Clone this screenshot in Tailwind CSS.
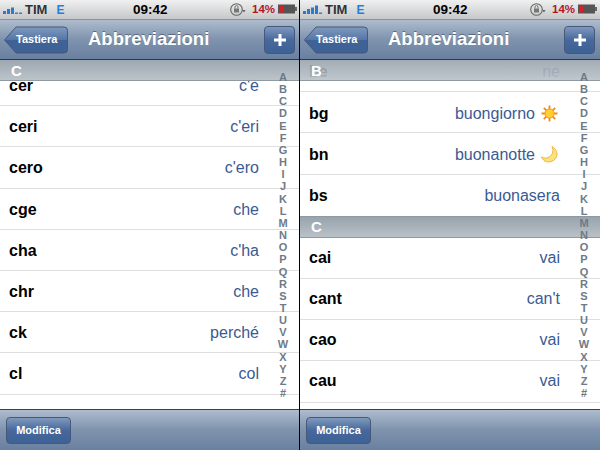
<!DOCTYPE html>
<html>
<head>
<meta charset="utf-8">
<script src="https://cdn.jsdelivr.net/npm/@tailwindcss/browser@4"></script>
</head>
<body class="m-0 bg-black">
<div class="flex w-[600px] h-[450px] overflow-hidden font-['Liberation_Sans',Arial,sans-serif]">

<!-- LEFT -->
<section class="relative flex flex-col w-[299px] h-[450px] mr-px bg-white overflow-hidden">
  <div class="flex items-center h-[19px] pl-[3px] bg-gradient-to-b from-[#f0f0f0] to-[#c6c8c9] relative z-20">
    <svg width="20" height="11" viewBox="0 0 20 11" class="mr-[2px]"><g fill="#2f78cc"><rect x="0" y="7" width="3" height="3"/><rect x="4" y="5" width="3" height="5"/><rect x="8" y="3.500" width="3" height="6.500"/></g><g fill="#4f7cb0"><rect x="12" y="8.500" width="3" height="1.500"/><rect x="16" y="8.500" width="3" height="1.500"/></g></svg>
    <span class="text-[13px] font-bold text-[#333] leading-none">TIM</span>
    <span class="text-[12px] font-bold text-[#1f7fe0] ml-[9px] leading-none">E</span>
    <span class="absolute left-[133px] text-[13.5px] font-bold text-black leading-none">09:42</span>
    <svg width="17" height="15" viewBox="0 0 17 15" class="absolute left-[229px] top-[2px]"><circle cx="7.5" cy="7.5" r="5.8" fill="none" stroke="#666" stroke-width="1.1"/><path d="M13 8l2 2.4 1.5-2.4" fill="#666"/><rect x="5" y="6.5" width="5" height="4" fill="#777"/><path d="M6 6.5v-1.500a1.500 1.500 0 0 1 3 0v1.500" fill="none" stroke="#777"/></svg>
    <span class="absolute left-[252px] text-[11.5px] font-bold text-[#b5161f] leading-none">14%</span>
    <svg width="20" height="10" viewBox="0 0 20 10" class="absolute left-[278px] top-[4px]"><rect x="0" y="0.500" width="17" height="9" fill="#555"/><rect x="1" y="1.500" width="4" height="7" fill="#d5202a"/><rect x="17" y="3" width="2" height="4" fill="#666"/></svg>
  </div>
  <header class="relative z-20 flex items-center justify-between h-[41px] pr-[4px] pl-[5px] bg-gradient-to-b from-[#aebccd] via-[#7f93ae] to-[#6a80a0] border-t border-[#8a929b] border-b border-b-[#2d3a4a]">
    <div class="relative flex items-center h-[27px] w-[63px] ml-[1px]">
      <svg width="64" height="28" viewBox="0 0 64 28" class="absolute -left-[2px] top-0"><defs><linearGradient id="bk1" x1="0" y1="0" x2="0" y2="1"><stop offset="0" stop-color="#7f99bd"/><stop offset="0.5" stop-color="#5476a6"/><stop offset="0.5" stop-color="#3f6297"/><stop offset="1" stop-color="#3e6196"/></linearGradient></defs><path d="M0.500 14 L12 1 H60 a3.500 3.500 0 0 1 3.500 3.500 V23.500 a3.500 3.500 0 0 1 -3.500 3.500 H12 Z" fill="url(#bk1)" stroke="#46597a"/></svg>
      <span class="relative ml-[10px] text-[11px] font-bold text-white leading-none">Tastiera</span>
    </div>
    <h1 class="absolute left-[88px] top-[8px] text-[18.5px] font-bold text-white leading-[22px] m-0 [text-shadow:0_-1px_0_rgba(0,0,0,0.35)]">Abbreviazioni</h1>
    <div class="flex items-center justify-center w-[31px] h-[28px] rounded-[4px] border border-[#46597a] bg-gradient-to-b from-[#7f99bd] via-[#46689b] to-[#3e6196]">
      <svg width="14" height="14" viewBox="0 0 14 14"><path d="M5.500 1h3v4.500H13v3H8.500V13h-3V8.500H1v-3h4.500z" fill="#fff"/></svg>
    </div>
  </header>

  <div class="relative flex-1 overflow-hidden">
    <div class="absolute z-10 left-0 right-0 top-0 flex items-center h-[21px] pl-[11px] bg-gradient-to-b from-[#98a3ac]/95 to-[#b9c1c8]/95 border-b border-[#8f99a2]">
      <span class="text-[15px] font-bold text-white leading-none">C</span>
    </div>
    <div class="pt-[5px] text-[16px]">
      <div class="flex items-center justify-between h-[41.2px] pt-[2px] pl-[9px] pr-[40px] border-b border-[#dfdfdf]"><b class="text-black">cer</b><span class="text-[#3b5a94]">c'è</span></div>
      <div class="flex items-center justify-between h-[41.2px] pt-[2px] pl-[9px] pr-[40px] border-b border-[#dfdfdf]"><b class="text-black">ceri</b><span class="text-[#3b5a94]">c'eri</span></div>
      <div class="flex items-center justify-between h-[41.2px] pt-[2px] pl-[9px] pr-[40px] border-b border-[#dfdfdf]"><b class="text-black">cero</b><span class="text-[#3b5a94]">c'ero</span></div>
      <div class="flex items-center justify-between h-[41.2px] pt-[2px] pl-[9px] pr-[40px] border-b border-[#dfdfdf]"><b class="text-black">cge</b><span class="text-[#3b5a94]">che</span></div>
      <div class="flex items-center justify-between h-[41.2px] pt-[2px] pl-[9px] pr-[40px] border-b border-[#dfdfdf]"><b class="text-black">cha</b><span class="text-[#3b5a94]">c'ha</span></div>
      <div class="flex items-center justify-between h-[41.2px] pt-[2px] pl-[9px] pr-[40px] border-b border-[#dfdfdf]"><b class="text-black">chr</b><span class="text-[#3b5a94]">che</span></div>
      <div class="flex items-center justify-between h-[41.2px] pt-[2px] pl-[9px] pr-[40px] border-b border-[#dfdfdf]"><b class="text-black">ck</b><span class="text-[#3b5a94]">perché</span></div>
      <div class="flex items-center justify-between h-[41.2px] pt-[2px] pl-[9px] pr-[40px] border-b border-[#dfdfdf]"><b class="text-black">cl</b><span class="text-[#3b5a94]">col</span></div>
    </div>
    <div class="absolute z-10 right-[6px] top-[11px] w-[20px] flex flex-col items-center text-[11px] font-bold text-[#6f7a86] leading-[12.15px]">
      <span>A</span><span>B</span><span>C</span><span>D</span><span>E</span><span>F</span><span>G</span><span>H</span><span>I</span><span>J</span><span>K</span><span>L</span><span>M</span><span>N</span><span>O</span><span>P</span><span>Q</span><span>R</span><span>S</span><span>T</span><span>U</span><span>V</span><span>W</span><span>X</span><span>Y</span><span>Z</span><span>#</span>
    </div>
  </div>

  <footer class="flex items-center h-[41px] pl-[6px] bg-gradient-to-b from-[#aebccd] via-[#7f93ae] to-[#6a80a0] border-t border-[#3a3f46]">
    <div class="flex items-center justify-center w-[65px] h-[27px] rounded-[4px] border border-[#46597a] bg-gradient-to-b from-[#7f99bd] via-[#46689b] to-[#3e6196]">
      <span class="text-[11px] font-bold text-white leading-none">Modifica</span>
    </div>
  </footer>
</section>

<!-- RIGHT -->
<section class="relative flex flex-col w-[300px] h-[450px] bg-white overflow-hidden">
  <div class="flex items-center h-[19px] pl-[3px] bg-gradient-to-b from-[#f0f0f0] to-[#c6c8c9] relative z-20">
    <svg width="20" height="11" viewBox="0 0 20 11" class="mr-[2px]"><g fill="#2f78cc"><rect x="0" y="7" width="3" height="3"/><rect x="4" y="5" width="3" height="5"/><rect x="8" y="3.500" width="3" height="6.500"/><rect x="12" y="1.500" width="3" height="8.500"/></g><rect x="16" y="8.500" width="3" height="1.500" fill="#4f7cb0"/></svg>
    <span class="text-[13px] font-bold text-[#333] leading-none">TIM</span>
    <span class="text-[12px] font-bold text-[#1f7fe0] ml-[9px] leading-none">E</span>
    <span class="absolute left-[133px] text-[13.5px] font-bold text-black leading-none">09:42</span>
    <svg width="17" height="15" viewBox="0 0 17 15" class="absolute left-[229px] top-[2px]"><circle cx="7.5" cy="7.5" r="5.8" fill="none" stroke="#666" stroke-width="1.1"/><path d="M13 8l2 2.4 1.5-2.4" fill="#666"/><rect x="5" y="6.5" width="5" height="4" fill="#777"/><path d="M6 6.5v-1.500a1.500 1.500 0 0 1 3 0v1.500" fill="none" stroke="#777"/></svg>
    <span class="absolute left-[252px] text-[11.5px] font-bold text-[#b5161f] leading-none">14%</span>
    <svg width="20" height="10" viewBox="0 0 20 10" class="absolute left-[278px] top-[4px]"><rect x="0" y="0.500" width="17" height="9" fill="#555"/><rect x="1" y="1.500" width="4" height="7" fill="#d5202a"/><rect x="17" y="3" width="2" height="4" fill="#666"/></svg>
  </div>
  <header class="relative z-20 flex items-center justify-between h-[41px] pr-[5px] pl-[5px] bg-gradient-to-b from-[#aebccd] via-[#7f93ae] to-[#6a80a0] border-t border-[#8a929b] border-b border-b-[#2d3a4a]">
    <div class="relative flex items-center h-[27px] w-[63px] ml-[1px]">
      <svg width="64" height="28" viewBox="0 0 64 28" class="absolute -left-[2px] top-0"><path d="M0.500 14 L12 1 H60 a3.500 3.500 0 0 1 3.500 3.500 V23.500 a3.500 3.500 0 0 1 -3.500 3.500 H12 Z" fill="url(#bk1)" stroke="#46597a"/></svg>
      <span class="relative ml-[10px] text-[11px] font-bold text-white leading-none">Tastiera</span>
    </div>
    <h1 class="absolute left-[88px] top-[8px] text-[18.5px] font-bold text-white leading-[22px] m-0 [text-shadow:0_-1px_0_rgba(0,0,0,0.35)]">Abbreviazioni</h1>
    <div class="flex items-center justify-center w-[31px] h-[28px] rounded-[4px] border border-[#46597a] bg-gradient-to-b from-[#7f99bd] via-[#46689b] to-[#3e6196]">
      <svg width="14" height="14" viewBox="0 0 14 14"><path d="M5.500 1h3v4.500H13v3H8.500V13h-3V8.500H1v-3h4.500z" fill="#fff"/></svg>
    </div>
  </header>

  <div class="relative flex-1 overflow-hidden">
    <div class="absolute z-10 left-0 right-0 top-0 flex items-center h-[21px] pl-[11px] bg-gradient-to-b from-[#98a3ac]/90 to-[#b9c1c8]/90 border-b border-[#8f99a2]">
      <span class="text-[15px] font-bold text-white leading-none">B</span>
    </div>
    <div class="-mt-[9px] text-[16px]">
      <div class="flex items-center justify-between h-[41.2px] pt-[2px] pl-[9px] pr-[40px] border-b border-[#dfdfdf]"><b class="text-black">be</b><span class="text-[#3b5a94]">ne</span></div>
      <div class="flex items-center justify-between h-[41.2px] pt-[3px] pl-[9px] pr-[40px] border-b border-[#dfdfdf]"><b class="text-black">bg</b><span class="flex items-center gap-[6px] text-[#3b5a94]">buongiorno
        <svg width="17" height="17" viewBox="0 0 17 17" class="mr-[2px]"><g stroke="#ef8a1c" stroke-width="1.800"><path d="M8.500 0.500v16M0.500 8.500h16M2.800 2.800l11.400 11.400M14.200 2.800L2.800 14.200"/></g><circle cx="8.500" cy="8.500" r="4.600" fill="#ffcf2e" stroke="#f59a1f"/></svg></span></div>
      <div class="flex items-center justify-between h-[41.200px] pt-[3px] pl-[9px] pr-[40px] border-b border-[#dfdfdf]"><b class="text-black">bn</b><span class="flex items-center gap-[6px] text-[#3b5a94]">buonanotte
        <svg width="17" height="17" viewBox="0 0 17 17" class="mr-[2px]"><path d="M11 0.500 C15.500 3 17.500 8 15 12 C12.500 16 6 17.500 2.500 14 C1.500 13 0.800 12 0.500 11 C3 12.500 6.500 12.500 9 10.500 C12 8 12.500 4 11 0.500 Z" fill="#fbe27a" stroke="#e8a92a" stroke-width="0.800"/></svg></span></div>
      <div class="flex items-center justify-between h-[41.2px] pt-[2px] pl-[9px] pr-[40px]"><b class="text-black">bs</b><span class="text-[#3b5a94]">buonasera</span></div>
      <div class="flex items-center h-[22px] pl-[11px] bg-gradient-to-b from-[#98a3ac] to-[#b9c1c8] border-y border-[#8f99a2]">
        <span class="text-[15px] font-bold text-white leading-none">C</span>
      </div>
      <div class="flex items-center justify-between h-[41.2px] pl-[9px] pr-[40px] border-b border-[#dfdfdf]"><b class="text-black">cai</b><span class="text-[#3b5a94]">vai</span></div>
      <div class="flex items-center justify-between h-[41.2px] pl-[9px] pr-[40px] border-b border-[#dfdfdf]"><b class="text-black">cant</b><span class="text-[#3b5a94]">can't</span></div>
      <div class="flex items-center justify-between h-[41.2px] pl-[9px] pr-[40px] border-b border-[#dfdfdf]"><b class="text-black">cao</b><span class="text-[#3b5a94]">vai</span></div>
      <div class="flex items-center justify-between h-[41.2px] pl-[9px] pr-[40px] border-b border-[#dfdfdf]"><b class="text-black">cau</b><span class="text-[#3b5a94]">vai</span></div>
    </div>
    <div class="absolute z-10 right-[6px] top-[11px] w-[20px] flex flex-col items-center text-[11px] font-bold text-[#6f7a86] leading-[12.15px]">
      <span>A</span><span>B</span><span>C</span><span>D</span><span>E</span><span>F</span><span>G</span><span>H</span><span>I</span><span>J</span><span>K</span><span>L</span><span>M</span><span>N</span><span>O</span><span>P</span><span>Q</span><span>R</span><span>S</span><span>T</span><span>U</span><span>V</span><span>W</span><span>X</span><span>Y</span><span>Z</span><span>#</span>
    </div>
  </div>

  <footer class="flex items-center h-[41px] pl-[6px] bg-gradient-to-b from-[#aebccd] via-[#7f93ae] to-[#6a80a0] border-t border-[#3a3f46]">
    <div class="flex items-center justify-center w-[65px] h-[27px] rounded-[4px] border border-[#46597a] bg-gradient-to-b from-[#7f99bd] via-[#46689b] to-[#3e6196]">
      <span class="text-[11px] font-bold text-white leading-none">Modifica</span>
    </div>
  </footer>
</section>
</div>
</body>
</html>
